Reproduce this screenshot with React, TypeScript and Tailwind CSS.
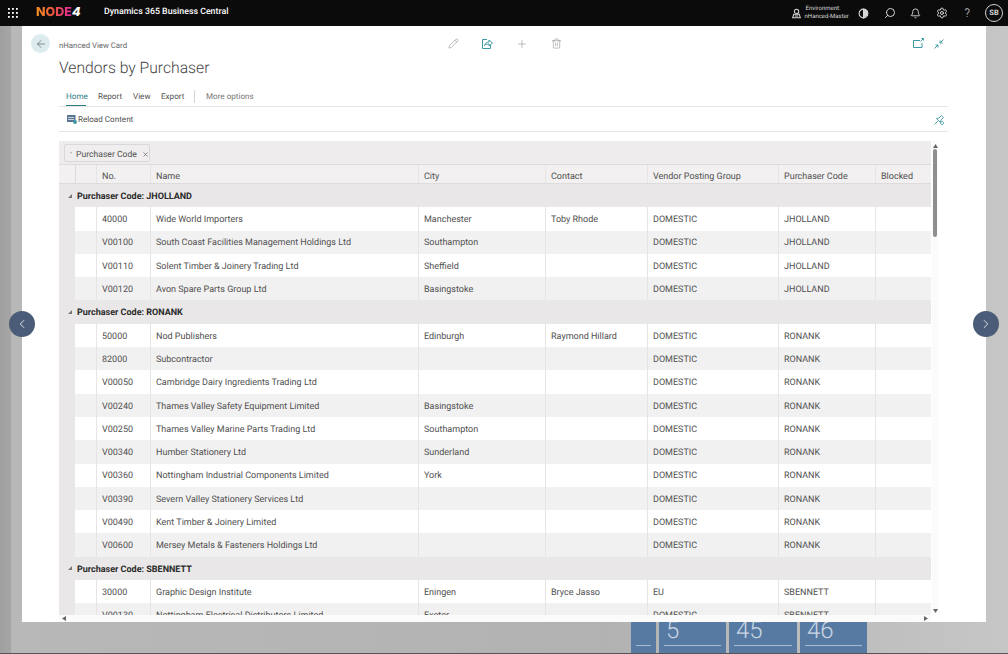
import { ArrowLeft, Bell, ChevronLeft, ChevronRight, Plus, Search, Settings, Trash2, Pencil, X } from "lucide-react";

type Vendor = {
  no: string;
  name: string;
  city?: string;
  contact?: string;
  group?: string;
  purchaser: string;
};

const groups: { code: string; vendors: Vendor[] }[] = [
  {
    code: "JHOLLAND",
    vendors: [
      { no: "40000", name: "Wide World Importers", city: "Manchester", contact: "Toby Rhode", purchaser: "JHOLLAND" },
      { no: "V00100", name: "South Coast Facilities Management Holdings Ltd", city: "Southampton", purchaser: "JHOLLAND" },
      { no: "V00110", name: "Solent Timber & Joinery Trading Ltd", city: "Sheffield", purchaser: "JHOLLAND" },
      { no: "V00120", name: "Avon Spare Parts Group Ltd", city: "Basingstoke", purchaser: "JHOLLAND" },
    ],
  },
  {
    code: "RONANK",
    vendors: [
      { no: "50000", name: "Nod Publishers", city: "Edinburgh", contact: "Raymond Hillard", purchaser: "RONANK" },
      { no: "82000", name: "Subcontractor", purchaser: "RONANK" },
      { no: "V00050", name: "Cambridge Dairy Ingredients Trading Ltd", purchaser: "RONANK" },
      { no: "V00240", name: "Thames Valley Safety Equipment Limited", city: "Basingstoke", purchaser: "RONANK" },
      { no: "V00250", name: "Thames Valley Marine Parts Trading Ltd", city: "Southampton", purchaser: "RONANK" },
      { no: "V00340", name: "Humber Stationery Ltd", city: "Sunderland", purchaser: "RONANK" },
      { no: "V00360", name: "Nottingham Industrial Components Limited", city: "York", purchaser: "RONANK" },
      { no: "V00390", name: "Severn Valley Stationery Services Ltd", purchaser: "RONANK" },
      { no: "V00490", name: "Kent Timber & Joinery Limited", purchaser: "RONANK" },
      { no: "V00600", name: "Mersey Metals & Fasteners Holdings Ltd", purchaser: "RONANK" },
    ],
  },
  {
    code: "SBENNETT",
    vendors: [
      { no: "30000", name: "Graphic Design Institute", city: "Eningen", contact: "Bryce Jasso", group: "EU", purchaser: "SBENNETT" },
      { no: "V00130", name: "Nottingham Electrical Distributors Limited", city: "Exeter", purchaser: "SBENNETT" },
    ],
  },
];

const columns = [
  { label: "No.", w: "w-[54px]" },
  { label: "Name", w: "w-[268px]" },
  { label: "City", w: "w-[127px]" },
  { label: "Contact", w: "w-[102px]" },
  { label: "Vendor Posting Group", w: "w-[131px]" },
  { label: "Purchaser Code", w: "w-[97px]" },
  { label: "Blocked", w: "w-[56px]" },
];

function Cell({ w, children }: { w: string; children?: React.ReactNode }) {
  return (
    <div className={`${w} shrink-0 h-full px-[5px] pt-[4px] flex items-center border-l border-[#e6e4e4] whitespace-nowrap overflow-hidden`}>
      {children}
    </div>
  );
}

function GroupRow({ code }: { code: string }) {
  return (
    <div className="h-[23.3px] flex items-center bg-[#e9e7e7] text-[#2b2b2b] font-bold">
      <svg width="4" height="4" viewBox="0 0 4 4" className="ml-[9px] mr-[5px] shrink-0">
        <path d="M4 0v4H0z" fill="#777" />
      </svg>
      <span className="pt-[4px]">Purchaser Code: {code}</span>
    </div>
  );
}

function VendorRow({ vendor, shaded }: { vendor: Vendor; shaded: boolean }) {
  return (
    <div className="h-[23.3px] flex bg-[#e9e7e7]">
      <div className="w-4 shrink-0" />
      <div className={`flex flex-1 ${shaded ? "bg-[#f2f1f1]" : "bg-white"}`}>
        <div className="w-[21px] shrink-0" />
        <Cell w={columns[0].w}>{vendor.no}</Cell>
        <Cell w={columns[1].w}>{vendor.name}</Cell>
        <Cell w={columns[2].w}>{vendor.city}</Cell>
        <Cell w={columns[3].w}>{vendor.contact}</Cell>
        <Cell w={columns[4].w}>{vendor.group ?? "DOMESTIC"}</Cell>
        <Cell w={columns[5].w}>{vendor.purchaser}</Cell>
        <Cell w={columns[6].w} />
      </div>
    </div>
  );
}

function TopBar() {
  return (
    <header className="h-[26px] shrink-0 bg-[#0b0b0b] text-white flex items-center">
      <svg width="10" height="10" viewBox="0 0 10 10" className="ml-2 text-white" fill="currentColor">
        {[0, 4, 8].flatMap((x) => [0, 4, 8].map((y) => <rect key={`${x}${y}`} x={x} y={y} width="1.800" height="1.800" />))}
      </svg>
      <span className="ml-[18px] w-[50px] text-[12.500px] leading-none font-extrabold font-['Inter',sans-serif] flex">
        <span className="bg-gradient-to-r from-[#f7941d] via-[#f0503c] to-[#e0209a] bg-clip-text text-transparent">NODE</span>
        <span className="text-white italic">4</span>
      </span>
      <span className="ml-[18px] text-[8.800px] font-medium">Dynamics 365 Business Central</span>
      <div className="ml-auto flex items-center text-[#d8d8d8]">
        <svg width="11" height="11" viewBox="0 0 13 13" fill="none" stroke="currentColor" strokeWidth="1.200">
          <circle cx="6.500" cy="4" r="2.600" />
          <path d="M2 11.500 3.200 7.500h6.600l1.200 4zM1.500 11.500h10M4.500 9.500h4" />
        </svg>
        <div className="ml-[3px] w-[44px] text-[6px] leading-[8.500px] whitespace-nowrap">
          <div className="pl-px">Environment:</div>
          <div>nHanced-Master</div>
        </div>
        <svg width="11" height="11" viewBox="0 0 12 12" className="ml-[9px]" fill="none" stroke="currentColor" strokeWidth="1.200">
          <circle cx="6" cy="6" r="4.800" />
          <path d="M6 1.500V10.500L10 7.500V3.500z" fill="currentColor" />
        </svg>
        <Search size={12} className="ml-[15px] -scale-x-100" />
        <Bell size={11} className="ml-[14px]" />
        <Settings size={12} className="ml-[15px]" />
        <span className="ml-[17px] text-[12px] leading-none font-light">?</span>
        <span className="ml-[15px] mr-[5px] w-[18px] h-[18px] rounded-full border border-[#d0d0d0] flex items-center justify-center text-[7.500px] font-bold">SB</span>
      </div>
    </header>
  );
}

function CardHeader() {
  return (
    <>
      <div className="flex h-[30px] pt-[8px] pl-[9px] pr-[42px]">
        <div className="w-[19px] h-[19px] rounded-full bg-[#dcecee] flex items-center justify-center text-[#555]">
          <ArrowLeft size={12} strokeWidth={1.300} />
        </div>
        <span className="ml-[9px] w-[389px] mt-[6px] text-[7.800px] leading-[11px] text-[#666]">nHanced View Card</span>
        <div className="mt-[3px] flex items-center text-[#888] h-[13px]">
          <Pencil size={11} strokeWidth={1.200} />
          <svg width="12" height="12" viewBox="0 0 12 12" className="ml-[22px] text-[#3f9aa4]" fill="none" stroke="currentColor" strokeWidth="1">
            <path d="M6 1.500H1.500v9h8V7M3.500 7.500C4 5 6 4 8 4V2l3.500 3L8 8V6C6 6 4.500 6.300 3.500 7.500z" />
          </svg>
          <Plus size={12} strokeWidth={1.100} className="ml-[23px]" />
          <Trash2 size={11} strokeWidth={1.200} className="ml-[23px]" />
        </div>
        <div className="ml-auto mt-[3px] flex items-center text-[#3f9aa4] h-[13px]">
          <svg width="11" height="11" viewBox="0 0 11 11" fill="none" stroke="currentColor" strokeWidth="1">
            <path d="M7 2.500H.5v7h8.500V5M7.500 3.500 10.500.500M8.500.500h2v2" />
          </svg>
          <svg width="10" height="10" viewBox="0 0 10 10" className="ml-[10px]" fill="none" stroke="currentColor" strokeWidth="1">
            <path d="M9.500.500 6 4M6 1.500V4h2.500M.500 9.500 4 6M1.500 6H4v2.500" />
          </svg>
        </div>
      </div>
      <h1 className="pl-[37px] h-[22px] text-[15.700px] leading-[23px] font-light text-[#444]">Vendors by Purchaser</h1>
      <nav className="ml-[37px] mr-[38px] mt-[7px] h-[22px] border-b border-[#e6e6e6] flex items-start text-[8.100px] text-[#505050] pt-[5px]">
        <span className="ml-[7px] w-[20px] h-[16px] text-[#2b7a85] border-b border-[#2b7a85] leading-[12px]">Home</span>
        <span className="ml-[12px] w-[23px] leading-[12px]">Report</span>
        <span className="ml-[12px] w-[16px] leading-[12px]">View</span>
        <span className="ml-[12px] w-[22px] leading-[12px]">Export</span>
        <span className="ml-[11px] w-px h-[13px] bg-[#d4d4d4]" />
        <span className="ml-[11px] leading-[12px] text-[#777]">More options</span>
      </nav>
      <div className="ml-[37px] mr-[38px] h-[25px] border-b border-[#e6e6e6] flex items-center text-[8.100px] text-[#505050]">
        <svg width="10" height="10" viewBox="0 0 10 10" className="ml-[8px]">
          <rect y="1" width="8.500" height="7" fill="#5a7690" />
          <rect x="1" y="3" width="6" height="1" fill="#c9d6e0" />
          <rect x="1" y="5" width="6" height="1" fill="#c9d6e0" />
          <circle cx="8" cy="8" r="2" fill="#3f9aa4" />
        </svg>
        <span className="ml-px pt-[1px]">Reload Content</span>
        <svg width="11" height="11" viewBox="0 0 11 11" className="ml-auto mr-[3px] text-[#3f9aa4]" fill="none" stroke="currentColor" strokeWidth="0.900">
          <path d="M.500 10.500 4 7M2.500 4.500l4 4 .5-2.500L9.500 3.500 7.500 1.500 5 4zM8 7.500a1.500 1.500 0 1 0 .1 0z" />
        </svg>
      </div>
    </>
  );
}

function VendorTable() {
  return (
    <div className="ml-[37px] mr-[48px] mt-[9px] flex-1 min-h-0 flex flex-col text-[9px] text-[#505050]">
      <div className="flex-1 min-h-0 flex">
        <div className="w-[872px] shrink-0 overflow-hidden">
          <div className="h-[23px] bg-[#eeecec] flex items-end pb-[2px] pl-[5px]">
            <div className="h-[18px] w-[86px] border border-[#dad8d8] rounded-[2px] flex items-center bg-[#f0eeee] whitespace-nowrap">
              <span className="ml-[5px] w-[5px] text-[7px]">-</span>
              <span className="pl-[1px] pt-[4px] text-[8.600px]">Purchaser Code</span>
              <X size={7} className="ml-[5px] mt-[2px]" />
            </div>
          </div>
          <div className="h-[20px] flex bg-[#f2f0f0] border-t border-[#dddbdb] border-b">
            <div className="w-4 shrink-0" />
            <div className="w-[21px] shrink-0 border-l border-[#dddbdb]" />
            {columns.map((c) => (
              <Cell key={c.label} w={c.w}>
                <span className="pt-[4px]">{c.label}</span>
              </Cell>
            ))}
          </div>
          {groups.map((g) => (
            <div key={g.code}>
              <GroupRow code={g.code} />
              {g.vendors.map((v, i) => (
                <VendorRow key={v.no} vendor={v} shaded={i % 2 === 1} />
              ))}
            </div>
          ))}
        </div>
        <div className="w-[7px] ml-[1px] flex flex-col items-center bg-[#fbfbfb]">
          <svg width="5" height="4" viewBox="0 0 5 4" className="mt-[3px]">
            <path d="M2.500 0 5 4H0z" fill="#666" />
          </svg>
          <div className="mt-px w-[4px] h-[88px] rounded-full bg-[#8f8f8f]" />
          <svg width="5" height="4" viewBox="0 0 5 4" className="mt-auto mb-[2px]">
            <path d="M2.500 4 5 0H0z" fill="#666" />
          </svg>
        </div>
      </div>
      <div className="h-[7px] w-[872px] flex items-center justify-between bg-[#fbfbfb] px-[3px]">
        <svg width="4" height="5" viewBox="0 0 4 5">
          <path d="M0 2.500 4 0v5z" fill="#666" />
        </svg>
        <svg width="4" height="5" viewBox="0 0 4 5">
          <path d="M4 2.500 0 0v5z" fill="#666" />
        </svg>
      </div>
    </div>
  );
}

function Tile({ n, w }: { n?: string; w: string }) {
  return (
    <div className={`${w} h-full bg-[#577aa2] px-[5px] text-[#c9d6e4]`}>
      <div className="h-[24px] border-b border-[#a9bbd0] pl-[2px] flex items-end pb-[6px] text-[24px] leading-[18px] font-light whitespace-nowrap">
        {n}
      </div>
    </div>
  );
}

function NavArrow({ side }: { side: "left" | "right" }) {
  const Icon = side === "left" ? ChevronLeft : ChevronRight;
  return (
    <button
      className={`absolute top-[311px] ${side === "left" ? "left-[9px]" : "right-[9px]"} w-[26px] h-[26px] rounded-full bg-[#4b5c78] flex items-center justify-center text-white`}
    >
      <Icon size={14} strokeWidth={1.400} />
    </button>
  );
}

export default function App() {
  return (
    <div className="relative w-[1008px] h-[654px] overflow-hidden flex flex-col bg-[linear-gradient(90deg,#9f9f9f_0,#a6a6a6_11px,#b8b8b8_11px,#b2b2b2_60%,#c6c6c6_100%)] font-['Roboto',sans-serif] [text-rendering:geometricPrecision]">
      <TopBar />
      <main className="mx-[22px] h-[596px] shrink-0 bg-white flex flex-col">
        <CardHeader />
        <VendorTable />
      </main>
      <div className="flex-1 min-h-0 border-b border-[#555] flex gap-[3px] pl-[631px] overflow-hidden">
        <Tile w="w-[25px]" />
        <Tile w="w-[67px]" n="5" />
        <Tile w="w-[68px]" n="45" />
        <Tile w="w-[67px]" n="46" />
      </div>
      <NavArrow side="left" />
      <NavArrow side="right" />
    </div>
  );
}
